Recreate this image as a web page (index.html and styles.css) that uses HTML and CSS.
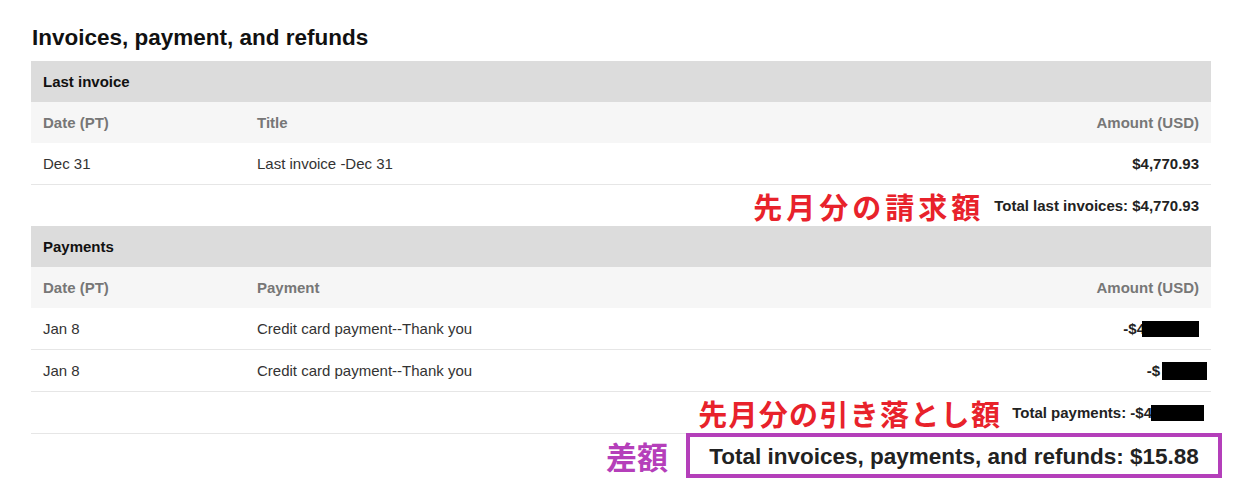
FILE: index.html
```html
<!DOCTYPE html>
<html lang="en">
<head>
<meta charset="utf-8">
<title>Invoices, payment, and refunds</title>
<link rel="stylesheet" href="styles.css">
</head>
<body>
<div class="page">
  <h1 class="title">Invoices, payment, and refunds</h1>
  <section class="block">
    <div class="band">Last invoice</div>
    <div class="row head">
      <span class="c-date">Date (PT)</span>
      <span class="c-title">Title</span>
      <span class="c-amt">Amount (USD)</span>
    </div>
    <div class="row data">
      <span class="c-date">Dec 31</span>
      <span class="c-title">Last invoice -Dec 31</span>
      <span class="c-amt strong">$4,770.93</span>
    </div>
    <div class="row total">
      <span class="note note-1">先月分の請求額</span>
      <span class="total-text">Total last invoices: $4,770.93</span>
    </div>
  </section>
  <section class="block">
    <div class="band">Payments</div>
    <div class="row head">
      <span class="c-date">Date (PT)</span>
      <span class="c-title">Payment</span>
      <span class="c-amt">Amount (USD)</span>
    </div>
    <div class="row data">
      <span class="c-date">Jan 8</span>
      <span class="c-title">Credit card payment--Thank you</span>
      <span class="c-amt strong">-$4<i class="redact r1"></i></span>
    </div>
    <div class="row data">
      <span class="c-date">Jan 8</span>
      <span class="c-title">Credit card payment--Thank you</span>
      <span class="c-amt strong shift">-$<i class="redact r2"></i></span>
    </div>
    <div class="row total bordered">
      <span class="note note-2">先月分の引き落とし額</span>
      <span class="total-text shift2">Total payments: -$4<i class="redact r3"></i></span>
    </div>
  </section>
  <div class="grand">
    <span class="diff">差額</span>
    <div class="grand-box">Total invoices, payments, and refunds: $15.88</div>
  </div>
</div>
</body>
</html>
```

FILE: styles.css
```css
html, body {
  margin: 0;
  padding: 0;
  background: #ffffff;
}
body {
  font-family: "Liberation Sans", Arial, sans-serif;
  color: #333333;
}
.page {
  width: 1180px;
  padding: 0 0 0 31px;
}
.title {
  margin: 0;
  padding: 25px 0 0 1px;
  height: 36px;
  font-size: 22.5px;
  line-height: 26px;
  font-weight: bold;
  color: #111111;
}
.block {
  display: flex;
  flex-direction: column;
}
.band {
  height: 41px;
  background: #dcdcdc;
  display: flex;
  align-items: center;
  padding-left: 12px;
  font-size: 15px;
  font-weight: bold;
  color: #111111;
}
.row {
  height: 41px;
  display: flex;
  align-items: center;
  padding: 0 12px;
  font-size: 15px;
}
.row.head {
  background: #f6f6f6;
  color: #777777;
  font-weight: bold;
}
.row.data {
  border-bottom: 1px solid #e6e6e6;
}
.row.total {
  justify-content: flex-end;
}
.row.total.bordered {
  border-bottom: 1px solid #e6e6e6;
}
.c-date {
  width: 214px;
}
.c-title {
  flex: 1;
}
.c-amt {
  text-align: right;
  display: flex;
  align-items: center;
  justify-content: flex-end;
}
.strong {
  font-weight: bold;
  color: #222222;
}
.redact {
  display: inline-block;
  background: #000000;
  height: 16px;
}
.r1 {
  width: 57px;
  margin-left: -3px;
}
.r2 {
  width: 45px;
  margin-left: 2px;
  height: 18px;
}
.shift {
  margin-right: -8px;
}
.r3 {
  width: 53px;
  margin-left: -1px;
}
.shift2 {
  margin-right: -5px;
  display: flex;
  align-items: center;
}
.total-text {
  font-size: 15px;
  font-weight: bold;
  color: #222222;
}
.note {
  font-family: "Noto Sans CJK JP", sans-serif;
  font-weight: bold;
  color: #e8222b;
  font-size: 29px;
  line-height: 34px;
}
.note-1 {
  letter-spacing: 4px;
  margin-right: 10px;
}
.note-2 {
  letter-spacing: 1.3px;
  margin-right: 11px;
}
.grand {
  display: flex;
  justify-content: flex-end;
  align-items: center;
  margin-right: -11px;
  margin-top: -1px;
}
.diff {
  font-family: "Noto Sans CJK JP", sans-serif;
  font-weight: bold;
  color: #b53fba;
  font-size: 31px;
  line-height: 40px;
  margin-right: 18px;
}
.grand-box {
  border: 4px solid #b43fba;
  height: 35px;
  padding-top: 2px;
  width: 528px;
  display: flex;
  align-items: center;
  justify-content: center;
  font-size: 22.5px;
  font-weight: bold;
  color: #222222;
}
```
